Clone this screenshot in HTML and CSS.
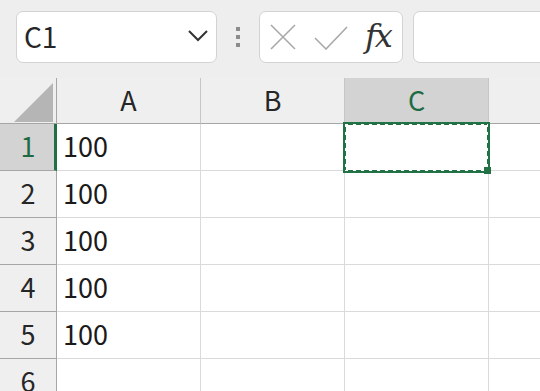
FILE: index.html
```html
<!DOCTYPE html>
<html lang="ja">
<head>
    <meta charset="UTF-8">
    <title>Sheet</title>
    <link rel="stylesheet" href="styles.css">
</head>
<body>
    <div class="toolbar">
        <div class="name-box">
            <span class="name">C1</span>
            <svg class="chevron" width="20" height="12" viewBox="0 0 20 12">
                <polyline points="1,1 10,10 19,1" fill="none" stroke="#333" stroke-width="2"/>
            </svg>
        </div>
        <div class="grip"><span></span><span></span><span></span></div>
        <div class="fx-box">
            <svg width="28" height="28" viewBox="0 0 28 28">
                <path d="M2 2 L26 26 M26 2 L2 26" stroke="#a9a9a9" stroke-width="1.6" fill="none"/>
            </svg>
            <svg width="34" height="24" viewBox="0 0 34 24">
                <polyline points="1,12 12,23 33,1" stroke="#a9a9a9" stroke-width="1.6" fill="none"/>
            </svg>
            <span class="fx">fx</span>
        </div>
        <div class="formula"></div>
    </div>

    <div class="sheet">
        <div class="corner"><div class="tri"></div></div>
        <div class="col-head">A</div>
        <div class="col-head">B</div>
        <div class="col-head active">C</div>
        <div class="col-head"></div>

        <div class="row-head active">1</div>
        <div class="cell">100</div>
        <div class="cell"></div>
        <div class="cell selected"><div class="sel"><div class="handle"></div></div></div>
        <div class="cell"></div>

        <div class="row-head">2</div>
        <div class="cell">100</div>
        <div class="cell"></div>
        <div class="cell"></div>
        <div class="cell"></div>

        <div class="row-head">3</div>
        <div class="cell">100</div>
        <div class="cell"></div>
        <div class="cell"></div>
        <div class="cell"></div>

        <div class="row-head">4</div>
        <div class="cell">100</div>
        <div class="cell"></div>
        <div class="cell"></div>
        <div class="cell"></div>

        <div class="row-head">5</div>
        <div class="cell">100</div>
        <div class="cell"></div>
        <div class="cell"></div>
        <div class="cell"></div>

        <div class="row-head">6</div>
        <div class="cell"></div>
        <div class="cell"></div>
        <div class="cell"></div>
        <div class="cell"></div>
    </div>
</body>
</html>
```

FILE: styles.css
```css
body {
    margin: 0;
    background: #eeeeee;
    font-family: "Noto Sans CJK JP", "Noto Sans", sans-serif;
    color: #222;
    overflow: hidden;
    width: 540px;
    height: 391px;
}
.toolbar {
    display: flex;
    align-items: center;
    height: 52px;
    padding: 11px 0 15px 16px;
    white-space: nowrap;
}
.name-box {
    box-sizing: border-box;
    width: 201px;
    height: 52px;
    flex: none;
    background: #fff;
    border: 1px solid #d3d3d3;
    border-radius: 7px;
    display: flex;
    align-items: center;
    justify-content: space-between;
    padding: 0 8px 2px 7px;
}
.name {
    font-size: 28px;
    color: #262626;
}
.grip {
    width: 4px;
    margin: 0 19px;
    display: flex;
    flex-direction: column;
    gap: 4px;
    flex: none;
}
.grip span {
    height: 4px;
    background: #8c8c8c;
}
.fx-box {
    box-sizing: border-box;
    width: 144px;
    height: 52px;
    flex: none;
    background: #fff;
    border: 1px solid #d3d3d3;
    border-radius: 7px;
    display: flex;
    align-items: center;
    padding: 0 0 0 9px;
}
.fx-box svg:first-child {
    margin-right: 17px;
}
.fx-box svg:nth-child(2) {
    margin-right: 17px;
    margin-top: 1px;
}
.fx {
    font-family: "DejaVu Serif", serif;
    font-style: italic;
    font-size: 32px;
    color: #333;
    line-height: 1;
    margin-top: -3px;
    letter-spacing: -2px;
}
.formula {
    box-sizing: border-box;
    width: 160px;
    height: 52px;
    flex: none;
    margin-left: 10px;
    background: #fff;
    border: 1px solid #d3d3d3;
    border-radius: 7px;
}
.sheet {
    display: grid;
    grid-template-columns: 57px 144px 144px 144px 52px;
    grid-template-rows: 46px repeat(6, 47px);
    background: #fff;
}
.corner, .col-head {
    box-sizing: border-box;
    background: #efefef;
    border-bottom: 1px solid #a6a6a6;
    border-right: 1px solid #c6c6c6;
}
.corner {
    border-right-color: #a6a6a6;
    display: flex;
    align-items: flex-end;
    justify-content: flex-end;
    padding: 0 3px 1px 0;
}
.tri {
    width: 39px;
    height: 39px;
    background: #b5b5b5;
    clip-path: polygon(100% 0, 100% 100%, 0 100%);
}
.col-head {
    display: flex;
    align-items: center;
    justify-content: center;
    font-size: 27px;
    color: #262626;
    padding-bottom: 2px;
}
.col-head.active {
    background: #d3d3d3;
    color: #1e6b43;
}
.row-head {
    box-sizing: border-box;
    background: #efefef;
    border-bottom: 1px solid #a6a6a6;
    border-right: 1px solid #a6a6a6;
    display: flex;
    align-items: center;
    justify-content: center;
    font-size: 27px;
    color: #262626;
    padding-bottom: 4px;
}
.row-head.active {
    background: #d3d3d3;
    color: #1e6b43;
    border-right: 3px solid #1e7145;
    padding-left: 2px;
}
.cell {
    box-sizing: border-box;
    border-bottom: 1px solid #dadada;
    border-right: 1px solid #dadada;
    display: flex;
    align-items: center;
    padding: 0 0 4px 6px;
    font-size: 27px;
    color: #1a1a1a;
}
.selected {
    position: relative;
}
.sel {
    position: absolute;
    left: -2px;
    top: -2px;
    width: 147px;
    height: 51px;
    box-sizing: border-box;
    border: 3px solid #217346;
    background: #fff;
}
.sel::before {
    content: "";
    position: absolute;
    left: -1px;
    top: -1px;
    right: -1px;
    bottom: -1px;
    background:
        repeating-linear-gradient(90deg, #fff 0 3px, transparent 3px 8px) top / 100% 1px no-repeat,
        repeating-linear-gradient(90deg, #fff 0 3px, transparent 3px 8px) bottom / 100% 1px no-repeat,
        repeating-linear-gradient(180deg, #fff 0 3px, transparent 3px 8px) left / 1px 100% no-repeat,
        repeating-linear-gradient(180deg, #fff 0 3px, transparent 3px 8px) right / 1px 100% no-repeat;
}
.handle {
    position: absolute;
    right: -4px;
    bottom: -4px;
    width: 7px;
    height: 7px;
    background: #217346;
}
```
